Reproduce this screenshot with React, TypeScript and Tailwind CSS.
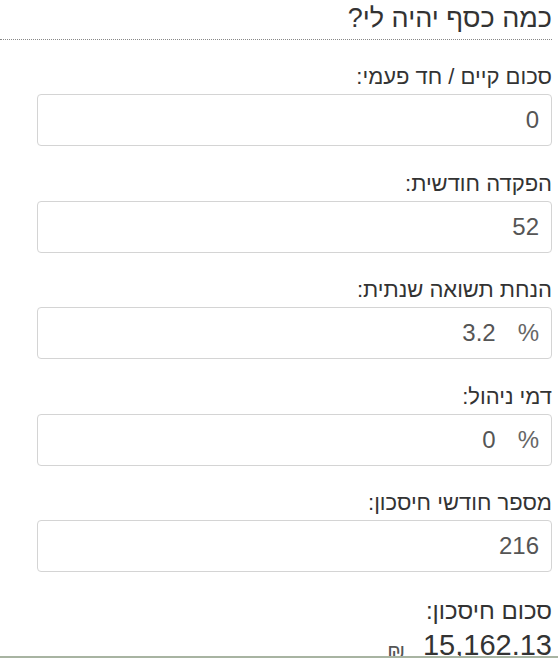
import React from "react";

type Field = {
  label: string;
  value: string;
  suffix?: string;
};

const fields: Field[] = [
  { label: "סכום קיים / חד פעמי:", value: "0" },
  { label: "הפקדה חודשית:", value: "52" },
  { label: "הנחת תשואה שנתית:", value: "3.2", suffix: "%" },
  { label: "דמי ניהול:", value: "0", suffix: "%" },
  { label: "מספר חודשי חיסכון:", value: "216" },
];

function InputRow({ label, value, suffix }: Field) {
  return (
    <div className="mb-[24.5px] flex flex-col">
      <label className="mb-[4px] text-[22px] leading-[26px] text-[#333]">
        {label}
      </label>
      <div className="flex h-[52px] w-[515px] items-center gap-[22px] rounded-[4px] border border-[#d4d4d4] bg-white px-[12px] text-[24px] text-[#555]">
        {suffix && <span className="text-[#666]">{suffix}</span>}
        <span dir="ltr">{value}</span>
      </div>
    </div>
  );
}

export default function App() {
  return (
    <div
      dir="rtl"
      className="h-[658px] w-[558px] overflow-hidden bg-white font-['Liberation_Sans',Arial,sans-serif]"
    >
      <h2 className="mr-[6px] border-b border-dotted border-[#888] pt-[3px] pb-[5px] text-[27px] leading-[31px] font-normal text-[#333]">
        כמה כסף יהיה לי?
      </h2>

      <div className="mt-[24px] mr-[6px]">
        {fields.map((f) => (
          <InputRow key={f.label} {...f} />
        ))}
      </div>

      <div className="mr-[6px] text-[24px] leading-[28px] text-[#333]">
        סכום חיסכון:
      </div>
      <div className="mr-[6px] flex h-[31px] items-start gap-[18px] overflow-hidden text-[#333]">
        <span dir="ltr" className="text-[29px] leading-[40px]">
          15,162.13
        </span>
        <span className="mt-[14px] text-[21px] leading-[24px] text-[#555]">
          ₪
        </span>
      </div>
      <div className="border-t-[3px] border-[#a8b4a2]" />
    </div>
  );
}
